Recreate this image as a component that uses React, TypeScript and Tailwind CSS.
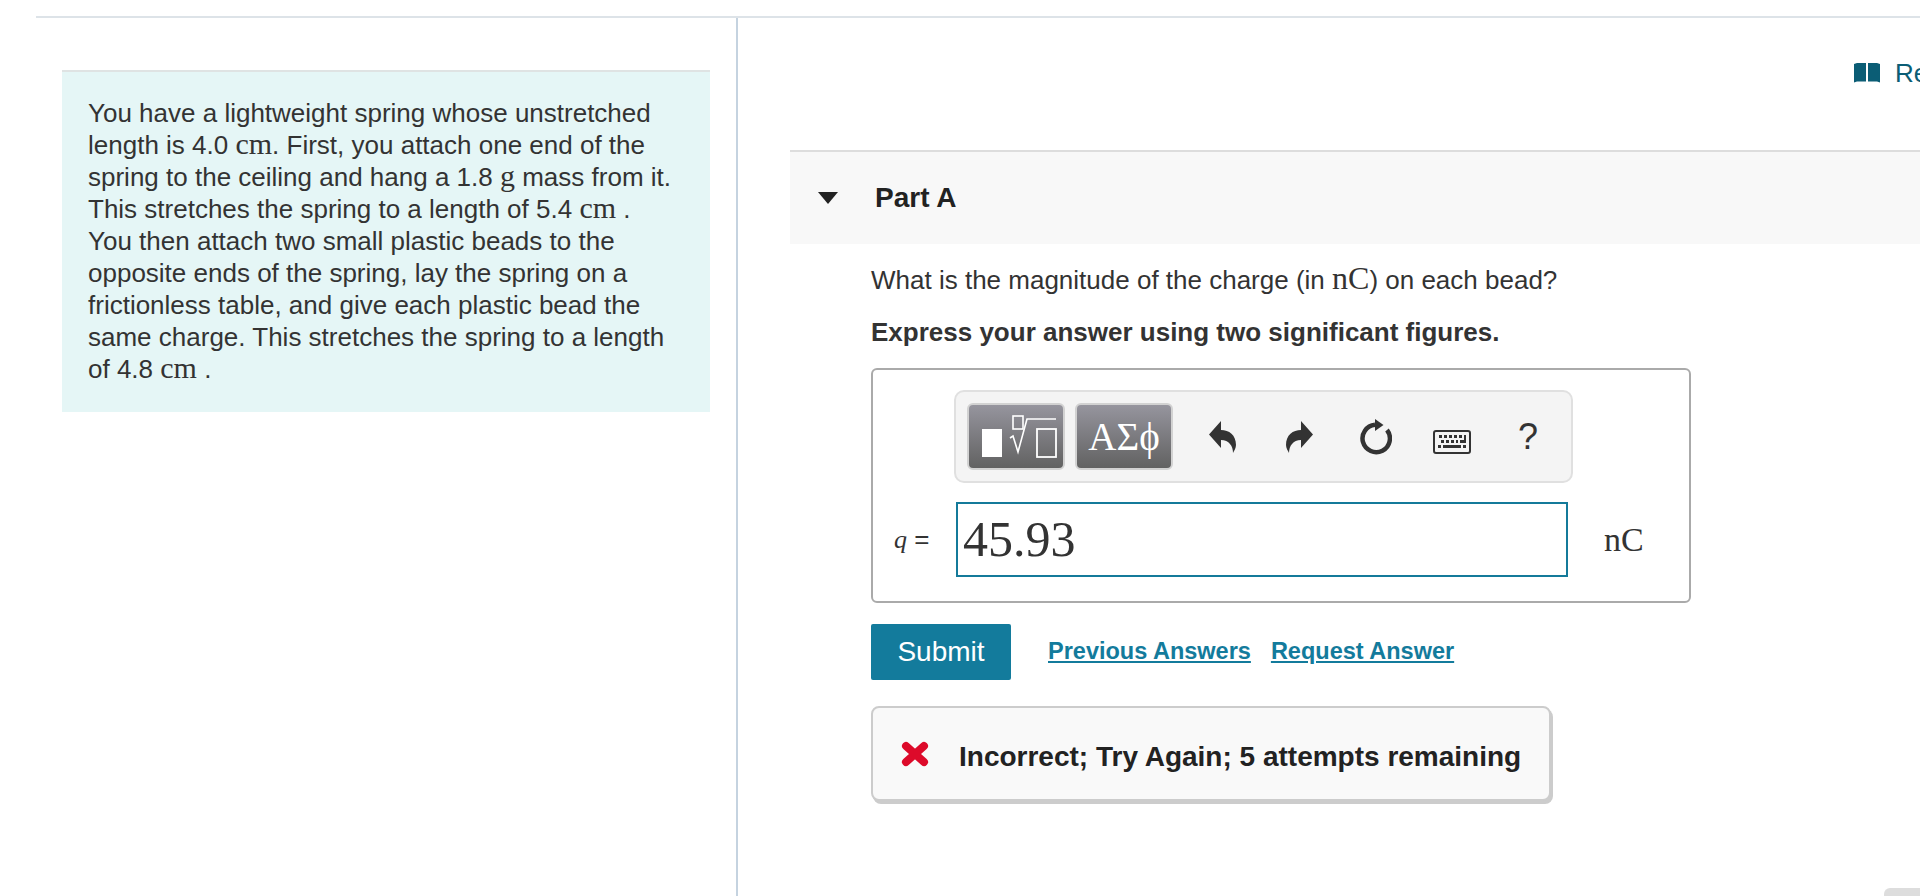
import React from "react";

const serif = "[font-family:'Liberation_Serif',serif]";

const Unit: React.FC<{ children: React.ReactNode }> = ({ children }) => (
  <span className="[font-family:'Liberation_Serif',serif] text-[30px] leading-none">{children}</span>
);

const ToolIcon: React.FC<{ width: string; children: React.ReactNode }> = ({ width, children }) => (
  <div className={`flex items-center justify-center ${width}`}>{children}</div>
);

const App: React.FC = () => {
  return (
    <div className="relative h-[896px] w-[1920px] overflow-hidden bg-white pt-4 pl-9 text-[#333333] [font-family:'Liberation_Sans',sans-serif]">
      <div className="flex h-[880px] border-t-2 border-[#dde3e8]">
        <div className="w-[702px] shrink-0 border-r-2 border-[#c5d3e0] pt-[52px] pl-[26px]">
          <div className="h-[342px] w-[648px] border-t-2 border-[#dfe3e3] bg-[#e5f6f6] pt-[25px] pl-[26px] text-[26px] leading-8">
            <p className="w-[610px] whitespace-nowrap">
              You have a lightweight spring whose unstretched
              <br />
              length is 4.0 <Unit>cm</Unit>. First, you attach one end of the
              <br />
              spring to the ceiling and hang a 1.8 <Unit>g</Unit> mass from it.
              <br />
              This stretches the spring to a length of 5.4 <Unit>cm</Unit> .
              <br />
              You then attach two small plastic beads to the
              <br />
              opposite ends of the spring, lay the spring on a
              <br />
              frictionless table, and give each plastic bead the
              <br />
              same charge. This stretches the spring to a length
              <br />
              of 4.8 <Unit>cm</Unit> .
            </p>
          </div>
        </div>

        <div className="min-w-0 flex-1 overflow-hidden pt-[42px] pl-[52px]">
          <div className="flex h-[26px] items-center pl-[1064px] whitespace-nowrap text-[#0b5d75]">
            <svg viewBox="0 0 26 20" className="h-5 w-[26px] shrink-0" fill="#0b5d75">
              <path d="M0 1 L3 0 H12 V18.5 H3 L0 19.5 Z" />
              <path d="M26 1 L23 0 H14 V18.5 H23 L26 19.5 Z" />
            </svg>
            <span className="ml-[15px] text-[26px]">Review</span>
          </div>

          <div className="mt-[64px] flex h-[94px] items-center border-t-2 border-[#dddddd] bg-[#f8f8f8]">
            <svg viewBox="0 0 20 12" className="ml-[28px] h-3 w-5" fill="#222222">
              <path d="M0 0 H20 L10 12 Z" />
            </svg>
            <span className="ml-[37px] text-[28px] font-bold text-[#222222]">Part A</span>
          </div>

          <div className="pl-[81px]">
            <p className="mt-[18px] text-[26px] leading-8">
              What is the magnitude of the charge (in <span className={`${serif} text-[32px] leading-none`}>nC</span>) on each bead?
            </p>
            <p className="mt-[20px] text-[26px] leading-8 font-bold">
              Express your answer using two significant figures.
            </p>

            <div className="mt-5 h-[235px] w-[820px] rounded-md border-2 border-[#aaaaaa] pt-[20px]">
              <div className="ml-[81px] flex h-[93px] w-[619px] items-center rounded-[10px] border-2 border-[#e0e0e0] bg-[#f4f4f4] pl-[11px]">
                <button className="flex h-[67px] w-[98px] items-center justify-center rounded-md border-2 border-[#d2d2d2] bg-gradient-to-b from-[#96959e] to-[#626262]">
                  <svg viewBox="0 0 94 63" className="h-[63px] w-[94px]" fill="none" stroke="#ffffff">
                    <rect x="13" y="24" width="20" height="28" fill="#ffffff" stroke="none" />
                    <rect x="44" y="11" width="10" height="13" strokeWidth="1.6" />
                    <path d="M41 33 L44 31 L49 47 L58 14 H87" strokeWidth="1.6" />
                    <rect x="68" y="24" width="19" height="28" strokeWidth="1.8" />
                  </svg>
                </button>
                <button className={`ml-[10px] flex h-[67px] w-[98px] items-center justify-center rounded-md border-2 border-[#d2d2d2] bg-gradient-to-b from-[#96959e] to-[#626262] text-[39px] leading-none text-white ${serif}`}>
                  ΑΣϕ
                </button>

                <ToolIcon width="ml-[36px] w-[27px]">
                  <svg viewBox="0 0 27 32" className="h-8 w-[27px]" fill="#333333">
                    <path d="M12 0 V9 C20 9 27 14 27 24 C27 27 25 30 24 32 C24 25 20 19 12 19 V27 L0 13.5 Z" />
                  </svg>
                </ToolIcon>
                <ToolIcon width="ml-[50px] w-[27px]">
                  <svg viewBox="0 0 27 32" className="h-8 w-[27px]" fill="#333333">
                    <path d="M15 0 V9 C7 9 0 14 0 24 C0 27 2 30 3 32 C3 25 7 19 15 19 V27 L27 13.5 Z" />
                  </svg>
                </ToolIcon>
                <ToolIcon width="ml-[47px] w-8">
                  <svg viewBox="0 0 32 36" className="h-9 w-8" fill="none">
                    <path d="M15 5.8 A13.7 13.7 0 1 0 27 11" stroke="#333333" strokeWidth="4.5" />
                    <path d="M15 0 L23.5 6 L15 12 Z" fill="#333333" />
                  </svg>
                </ToolIcon>
                <ToolIcon width="ml-[41px] w-[38px]">
                  <svg viewBox="0 0 38 24" className="mt-[10px] h-6 w-[38px]">
                    <rect x="1" y="1" width="36" height="22" rx="2" fill="none" stroke="#333333" strokeWidth="2" />
                    <path
                      d="M6 5h3v3H6zM11 5h3v3h-3zM16 5h3v3h-3zM21 5h3v3h-3zM26 5h3v3h-3zM31 5h2v8h-6v-3h4zM8 10h3v3H8zM13 10h3v3h-3zM18 10h3v3h-3zM23 10h2v3h-2zM5 15h3v3H5zM10 15h18v3H10zM30 15h3v3h-3z"
                      fill="#333333"
                    />
                  </svg>
                </ToolIcon>
                <div className="ml-[47px] text-[36px] leading-none text-[#333333]">?</div>
              </div>

              <div className="mt-[19px] flex h-[75px] items-center">
                <div className="ml-[21px] w-[62px] text-[26px]">
                  <span className={`${serif} italic`}>q</span> =
                </div>
                <div className="flex h-[75px] w-[612px] items-center border-2 border-[#147a9a] bg-white pl-[5px]">
                  <span className={`${serif} text-[50px]`}>45.93</span>
                </div>
                <span className={`ml-9 text-[34px] ${serif}`}>nC</span>
              </div>
            </div>

            <div className="mt-[21px] flex items-center">
              <button className="h-14 w-[140px] rounded-[2px] bg-[#137b9c] text-[28px] text-white">Submit</button>
              <a className="ml-[37px] text-[23.5px] font-bold text-[#137b9c] underline underline-offset-2">
                Previous Answers
              </a>
              <a className="ml-[20px] text-[23.5px] font-bold text-[#137b9c] underline underline-offset-2">
                Request Answer
              </a>
            </div>

            <div className="mt-[26px] flex h-[95px] w-[680px] items-center rounded-lg border-2 border-[#cccccc] bg-[#f9f9f9] shadow-[2px_3px_0_#cccccc]">
              <svg viewBox="0 0 28 26" className="ml-[28px] h-[26px] w-7" fill="none" stroke="#dd0a2a" strokeWidth="8" strokeLinecap="round">
                <path d="M5 5 L23 21 M23 5 L5 21" />
              </svg>
              <span className="ml-[30px] pt-[6px] text-[28px] font-bold text-[#222222]">Incorrect; Try Again; 5 attempts remaining</span>
            </div>
          </div>
        </div>
      </div>
      <div className="absolute right-0 bottom-0 h-2 w-9 rounded-tl-md bg-[#dddddd]" />
    </div>
  );
};

export default App;
